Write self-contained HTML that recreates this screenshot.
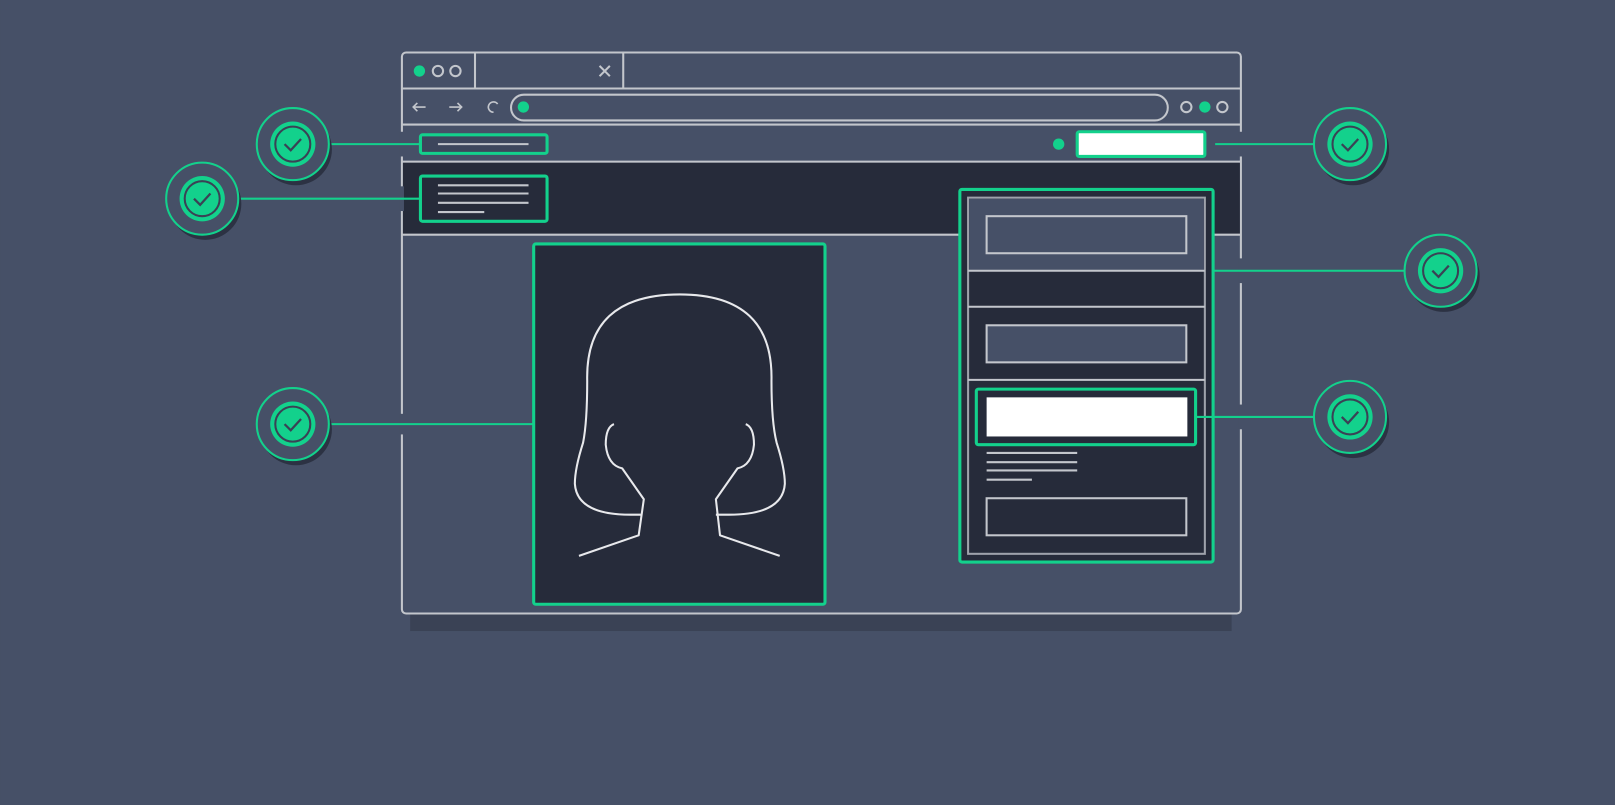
<!DOCTYPE html>
<html><head><meta charset="utf-8"><style>
html,body{margin:0;padding:0;background:#465067;overflow:hidden}
svg{display:block}
</style></head><body>
<svg width="1615" height="805" viewBox="0 0 1568 782" xmlns="http://www.w3.org/2000/svg">
<rect width="1568" height="782" fill="#465067"/>
<rect x="398" y="60" width="798" height="553" fill="#3a4255"/>
<rect x="390" y="51" width="815" height="545" rx="4" fill="#465067" stroke="#c3c6cc" stroke-width="2"/>
<rect x="391" y="158" width="813" height="70" fill="#262b3a"/>
<g fill="#465067">
<rect x="388" y="128" width="4" height="24"/>
<rect x="388" y="181" width="4" height="24"/>
<rect x="388" y="402" width="4" height="20"/>
<rect x="1203" y="128" width="4" height="24"/>
<rect x="1203" y="251" width="4" height="24"/>
<rect x="1203" y="393" width="4" height="24"/>
</g>
<g stroke="#c3c6cc" stroke-width="2" fill="none">
<line x1="390" y1="86" x2="1205" y2="86"/>
<line x1="461" y1="51" x2="461" y2="86"/>
<line x1="605" y1="51" x2="605" y2="86"/>
<line x1="390" y1="121" x2="1205" y2="121"/>
<line x1="390" y1="157" x2="1205" y2="157"/>
<line x1="390" y1="228" x2="1205" y2="228"/>
<path d="M582 64 L592 74 M592 64 L582 74"/>
<circle cx="425" cy="69" r="5"/>
<circle cx="442" cy="69" r="5"/>
<rect x="496" y="92" width="638" height="25" rx="12.5"/>
<circle cx="1152" cy="104" r="5"/>
<circle cx="1187" cy="104" r="5"/>
<path d="M401 104 H413 M405 100 L401 104 L405 108" stroke-width="1.6"/>
<path d="M436 104 H448 M444 100 L448 104 L444 108" stroke-width="1.6"/>
<path d="M483 101 A5 5 0 1 0 479 109" stroke-width="1.6"/>
</g>
<circle cx="407" cy="69" r="5.5" fill="#13d18c"/>
<circle cx="508" cy="104" r="5.5" fill="#13d18c"/>
<circle cx="1170" cy="104" r="5.5" fill="#13d18c"/>
<rect x="408" y="131" width="123" height="18" rx="2" fill="#3d465c" stroke="#13d18c" stroke-width="3"/>
<line x1="425" y1="140" x2="513" y2="140" stroke="#c3c6cc" stroke-width="2"/>
<circle cx="1028" cy="140" r="5.5" fill="#13d18c"/>
<rect x="1046" y="128" width="124" height="24" rx="2" fill="#fff" stroke="#13d18c" stroke-width="3"/>
<rect x="408" y="171" width="123" height="44" rx="2" fill="#262b3a" stroke="#13d18c" stroke-width="3"/>
<g stroke="#c3c6cc" stroke-width="2">
<line x1="425" y1="180" x2="513" y2="180"/>
<line x1="425" y1="188" x2="513" y2="188"/>
<line x1="425" y1="197" x2="513" y2="197"/>
<line x1="425" y1="206" x2="470" y2="206"/>
</g>
<rect x="518" y="237" width="283" height="350" rx="2" fill="#262b3a" stroke="#13d18c" stroke-width="3"/>
<g stroke="#e8e9ec" stroke-width="2" fill="none" stroke-linejoin="round">
<path d="M622 500 L612 500 Q560 500 558 470 Q558 455 566 430 Q570 410 570 370 Q568 286 660 286 Q751 286 749 370 Q749 410 754 430 Q762 455 762 470 Q760 500 708 500 L695 500"/>
<path d="M596 412 Q588 415 588 432 Q590 452 604 455 L625 485 L620 520 L562 540"/>
<path d="M724 412 Q732 415 732 432 Q730 452 716 455 L695 485 L699 520 L757 540"/>
</g>
<rect x="932" y="184" width="246" height="362" rx="2" fill="#262b3a" stroke="#13d18c" stroke-width="3"/>
<rect x="940" y="192" width="230" height="346" fill="#262b3a" stroke="#9ea2ab" stroke-width="2"/>
<rect x="941" y="193" width="228" height="70" fill="#465067"/>
<g stroke="#c3c6cc" stroke-width="2" fill="none">
<line x1="940" y1="263" x2="1170" y2="263"/>
<line x1="940" y1="298" x2="1170" y2="298"/>
<line x1="940" y1="369" x2="1170" y2="369"/>
<rect x="958" y="210" width="194" height="36" fill="#465067"/>
<rect x="958" y="316" width="194" height="36" fill="#465067"/>
<rect x="958" y="484" width="194" height="36"/>
<line x1="958" y1="440" x2="1046" y2="440"/>
<line x1="958" y1="449" x2="1046" y2="449"/>
<line x1="958" y1="457" x2="1046" y2="457"/>
<line x1="958" y1="466" x2="1002" y2="466"/>
</g>
<rect x="948" y="378" width="213" height="54" rx="2" fill="#262b3a" stroke="#13d18c" stroke-width="3"/>
<rect x="958" y="386" width="195" height="38" fill="#fff"/>
<g stroke="#13d18c" stroke-width="2">
<line x1="318" y1="140" x2="408" y2="140"/>
<line x1="230" y1="193" x2="408" y2="193"/>
<line x1="318" y1="412" x2="518" y2="412"/>
<line x1="1180" y1="140" x2="1277" y2="140"/>
<line x1="1178" y1="263" x2="1365" y2="263"/>
<line x1="1161" y1="405" x2="1277" y2="405"/>
</g>
<defs>
<g id="b">
<circle cx="3" cy="5" r="35" fill="#2c3243"/>
<circle cx="0" cy="0" r="35" fill="#465067" stroke="#13d18c" stroke-width="2"/>
<circle cx="0" cy="0" r="22" fill="#13d18c"/>
<circle cx="0" cy="0" r="17" fill="none" stroke="#3a4255" stroke-width="2"/>
<path d="M-8 0 L-2 6 L8 -5" fill="none" stroke="#3a4255" stroke-width="2.2"/>
</g>
</defs>
<use href="#b" x="284" y="140"/>
<use href="#b" x="196" y="193"/>
<use href="#b" x="284" y="412"/>
<use href="#b" x="1311" y="140"/>
<use href="#b" x="1399" y="263"/>
<use href="#b" x="1311" y="405"/>
</svg>
</body></html>
